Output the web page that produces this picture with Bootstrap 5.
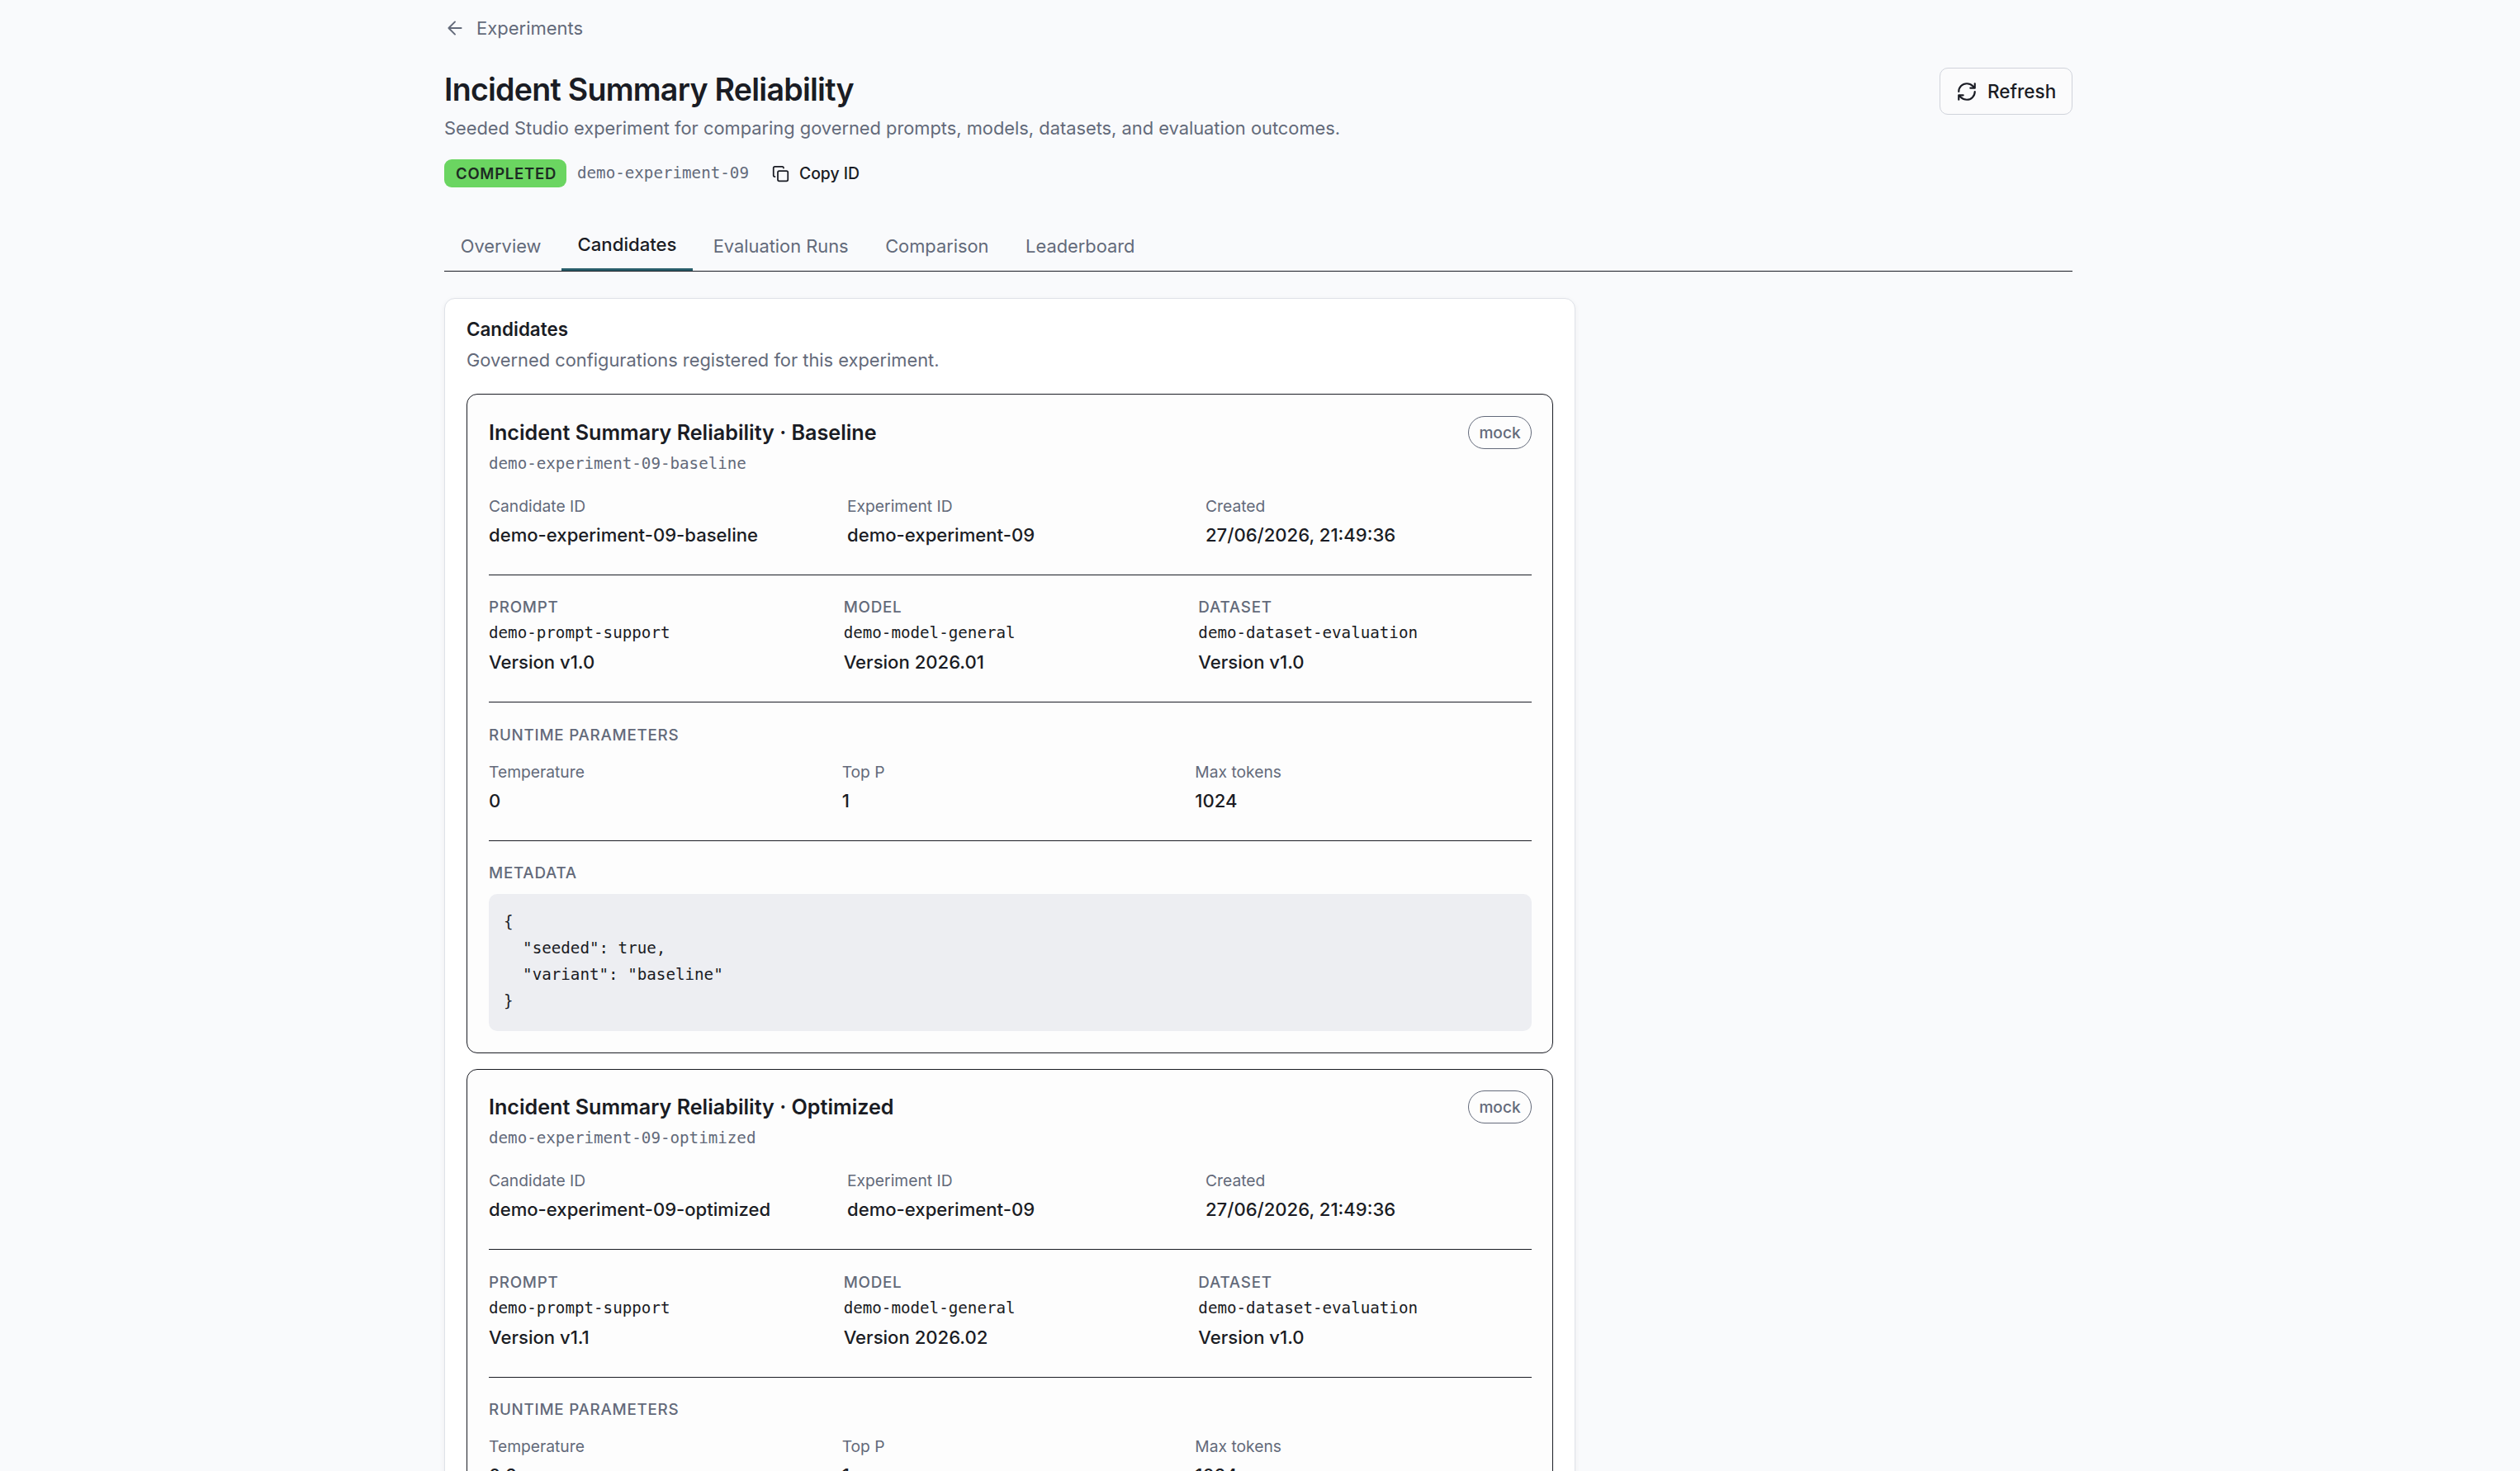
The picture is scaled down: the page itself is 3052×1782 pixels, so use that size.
<!DOCTYPE html>
<html lang="en">
<head>
<meta charset="utf-8">
<meta name="viewport" content="width=device-width, initial-scale=1">
<title>Incident Summary Reliability</title>
<link rel="stylesheet" href="https://cdn.jsdelivr.net/npm/bootstrap@5.3.0/dist/css/bootstrap.min.css">
<style>
  :root { --ink: #1a1c24; --soft: #636a7a; --page: #f9fafc; }
  body { background: var(--page); color: var(--ink); font-family: Inter, "Liberation Sans", sans-serif; font-size: 21.84px; line-height: 34px; }
  .shell { width: 1972px; margin-left: 538px; padding-top: 17px; }
  .soft { color: var(--soft); }
  svg { fill: none; stroke: currentColor; stroke-width: 2; stroke-linecap: round; stroke-linejoin: round; flex: none; }
  .crumb { gap: 13px; font-size: 22px; color: var(--soft); text-decoration: none; }
  .crumb svg { stroke-width: 1.8; }
  .page-head { margin-top: 31px; padding-bottom: 41px; }
  .page-title { font-size: 37.6px; line-height: 48px; font-weight: 600; letter-spacing: -.02em; margin: 3px 0 5px; }
  .meta-row { margin-top: 21px; height: 34px; }
  .mono { font-family: "DejaVu Sans Mono", "Liberation Mono", monospace; font-size: 19.2px; line-height: 28px; }
  .status { background: #6bd561; color: #1d2a23; font-size: 18.5px; font-weight: 600; letter-spacing: .75px; line-height: 34px; height: 34px; width: 148px; padding-left: 14px; white-space: nowrap; border-radius: 9px; margin-right: 13px; }
  .copy-link { gap: 12px; font-size: 19.4px; font-weight: 500; color: var(--ink); margin-left: 28px; padding: 0; border: 0; background: none; line-height: 34px; }
  .btn-refresh { height: 57px; width: 161px; padding: 0 0 0 19px; gap: 12px; border: 1px solid #d0d3db; border-radius: 10px; background: #fbfbfc; color: var(--ink); font-size: 22.5px; font-weight: 500; }
  .tabs { gap: 5px; border-bottom: 1px solid var(--ink); }
  .tabs .nav-link { height: 60px; padding: 13px 19.8px; color: var(--soft); line-height: 34px; font-size: 21.84px; border-radius: 0; }
  .tabs .nav-link.active { color: var(--ink); font-weight: 500; font-size: 22.15px; padding: 11px 19.4px 12px; border-bottom: 3px solid #295e6b; }
  .panel { width: 1370px; margin-top: 32px; padding: 22px 26px 26px; background: #fff; border: 1px solid #dfe2e8; border-radius: 13px; box-shadow: 0 2px 6px rgba(26,28,36,.06); }
  .panel-title { font-size: 22.4px; font-weight: 600; line-height: 30px; margin: 0 0 5px; }
  .candidate { margin-top: 24px; border: 1px solid var(--ink); border-radius: 13px; background: #fdfdfd; padding: 26px 25px 26px 26px; }
  .candidate-name { font-size: 25.15px; font-weight: 600; line-height: 35px; margin: 3px 0 6px; }
  .provider { height: 40px; width: 77px; line-height: 38px; font-size: 19.1px; font-weight: 500; color: var(--soft); border: 1px solid var(--soft); border-radius: 20px; }
  .facts { display: grid; grid-template-columns: repeat(3, minmax(0, 1fr)); }
  .facts-id { column-gap: 39px; margin-top: 22px; }
  .facts-ref { column-gap: 26px; }
  .facts-run { column-gap: 20px; margin-top: 15px; }
  .fact-label { font-size: 19.25px; line-height: 30px; color: var(--soft); margin-bottom: 3px; }
  .fact-value { font-size: 22.1px; font-weight: 500; line-height: 34px; }
  .eyebrow { font-size: 18.8px; font-weight: 500; letter-spacing: .75px; line-height: 30px; padding-top: 1px; margin-bottom: -1px; color: var(--soft); }
  .facts-ref .mono { margin: 3px 0 4px; }
  .facts-ref .eyebrow + .mono { margin-top: 4px; margin-bottom: 4px; }
  .facts-ref .eyebrow { margin-bottom: -2px; }
  .block { margin-top: 31px; border-top: 1px solid var(--ink); padding-top: 23px; }
  .block-run { padding-top: 24px; }
  .code-box { margin: 11px 0 0; height: 166px; padding: 18px; line-height: 32px; background: #edeef2; border-radius: 10px; color: var(--ink); overflow: hidden; }
  .candidate + .candidate { margin-top: 19px; padding-top: 25px; }
  .candidate + .candidate .block-ref { padding-top: 24px; }
  .candidate + .candidate .block-run { padding-top: 23px; }
</style>
<script src="https://cdn.jsdelivr.net/npm/bootstrap@5.3.0/dist/js/bootstrap.bundle.min.js"></script>
</head>
<body class="vh-100 overflow-hidden">
<main class="shell">
  <a class="crumb d-flex align-items-center" href="#">
    <svg width="26" height="26" viewBox="0 0 24 24"><path d="m12 19-7-7 7-7M19 12H5"/></svg>
    <span>Experiments</span>
  </a>

  <header class="page-head d-flex justify-content-between align-items-start">
    <div>
      <h1 class="page-title">Incident Summary Reliability</h1>
      <div class="soft">Seeded Studio experiment for comparing governed prompts, models, datasets, and evaluation outcomes.</div>
      <div class="meta-row d-flex align-items-center">
        <span class="status">COMPLETED</span>
        <span class="mono soft">demo-experiment-09</span>
        <button class="copy-link d-flex align-items-center" type="button">
          <svg width="21" height="21" viewBox="0 0 24 24"><rect x="8" y="8" width="14" height="14" rx="2"/><path d="M4 16c-1.1 0-2-.9-2-2V4c0-1.1.9-2 2-2h10c1.1 0 2 .9 2 2"/></svg>
          <span>Copy ID</span>
        </button>
      </div>
    </div>
    <button class="btn btn-refresh d-flex align-items-center" type="button">
      <svg width="26" height="26" viewBox="0 0 24 24"><path d="M3 12a9 9 0 0 1 9-9 9.75 9.75 0 0 1 6.74 2.74L21 8M21 3v5h-5M21 12a9 9 0 0 1-9 9 9.75 9.75 0 0 1-6.74-2.74L3 16M8 16H3v5"/></svg>
      <span>Refresh</span>
    </button>
  </header>

  <nav class="nav tabs">
    <a class="nav-link" href="#">Overview</a>
    <a class="nav-link active" href="#">Candidates</a>
    <a class="nav-link" href="#">Evaluation Runs</a>
    <a class="nav-link" href="#">Comparison</a>
    <a class="nav-link" href="#">Leaderboard</a>
  </nav>

  <section class="panel">
    <h2 class="panel-title">Candidates</h2>
    <div class="soft">Governed configurations registered for this experiment.</div>

    <article class="candidate">
      <div class="d-flex justify-content-between align-items-start">
        <div>
          <h3 class="candidate-name">Incident Summary Reliability · Baseline</h3>
          <div class="mono soft">demo-experiment-09-baseline</div>
        </div>
        <span class="provider text-center">mock</span>
      </div>
      <div class="facts facts-id">
        <div><div class="fact-label">Candidate ID</div><div class="fact-value">demo-experiment-09-baseline</div></div>
        <div><div class="fact-label">Experiment ID</div><div class="fact-value">demo-experiment-09</div></div>
        <div><div class="fact-label">Created</div><div class="fact-value">27/06/2026, 21:49:36</div></div>
      </div>
      <div class="block block-ref">
        <div class="facts facts-ref">
          <div><div class="eyebrow">PROMPT</div><div class="mono">demo-prompt-support</div><div class="fact-value">Version v1.0</div></div>
          <div><div class="eyebrow">MODEL</div><div class="mono">demo-model-general</div><div class="fact-value">Version 2026.01</div></div>
          <div><div class="eyebrow">DATASET</div><div class="mono">demo-dataset-evaluation</div><div class="fact-value">Version v1.0</div></div>
        </div>
      </div>
      <div class="block block-run">
        <div class="eyebrow">RUNTIME PARAMETERS</div>
        <div class="facts facts-run">
          <div><div class="fact-label">Temperature</div><div class="fact-value">0</div></div>
          <div><div class="fact-label">Top P</div><div class="fact-value">1</div></div>
          <div><div class="fact-label">Max tokens</div><div class="fact-value">1024</div></div>
        </div>
      </div>
      <div class="block">
        <div class="eyebrow">METADATA</div>
<pre class="mono code-box">{
  "seeded": true,
  "variant": "baseline"
}</pre>
      </div>
    </article>

    <article class="candidate">
      <div class="d-flex justify-content-between align-items-start">
        <div>
          <h3 class="candidate-name">Incident Summary Reliability · Optimized</h3>
          <div class="mono soft">demo-experiment-09-optimized</div>
        </div>
        <span class="provider text-center">mock</span>
      </div>
      <div class="facts facts-id">
        <div><div class="fact-label">Candidate ID</div><div class="fact-value">demo-experiment-09-optimized</div></div>
        <div><div class="fact-label">Experiment ID</div><div class="fact-value">demo-experiment-09</div></div>
        <div><div class="fact-label">Created</div><div class="fact-value">27/06/2026, 21:49:36</div></div>
      </div>
      <div class="block block-ref">
        <div class="facts facts-ref">
          <div><div class="eyebrow">PROMPT</div><div class="mono">demo-prompt-support</div><div class="fact-value">Version v1.1</div></div>
          <div><div class="eyebrow">MODEL</div><div class="mono">demo-model-general</div><div class="fact-value">Version 2026.02</div></div>
          <div><div class="eyebrow">DATASET</div><div class="mono">demo-dataset-evaluation</div><div class="fact-value">Version v1.0</div></div>
        </div>
      </div>
      <div class="block block-run">
        <div class="eyebrow">RUNTIME PARAMETERS</div>
        <div class="facts facts-run">
          <div><div class="fact-label">Temperature</div><div class="fact-value">0.2</div></div>
          <div><div class="fact-label">Top P</div><div class="fact-value">1</div></div>
          <div><div class="fact-label">Max tokens</div><div class="fact-value">1024</div></div>
        </div>
      </div>
    </article>
  </section>
</main>
</body>
</html>
